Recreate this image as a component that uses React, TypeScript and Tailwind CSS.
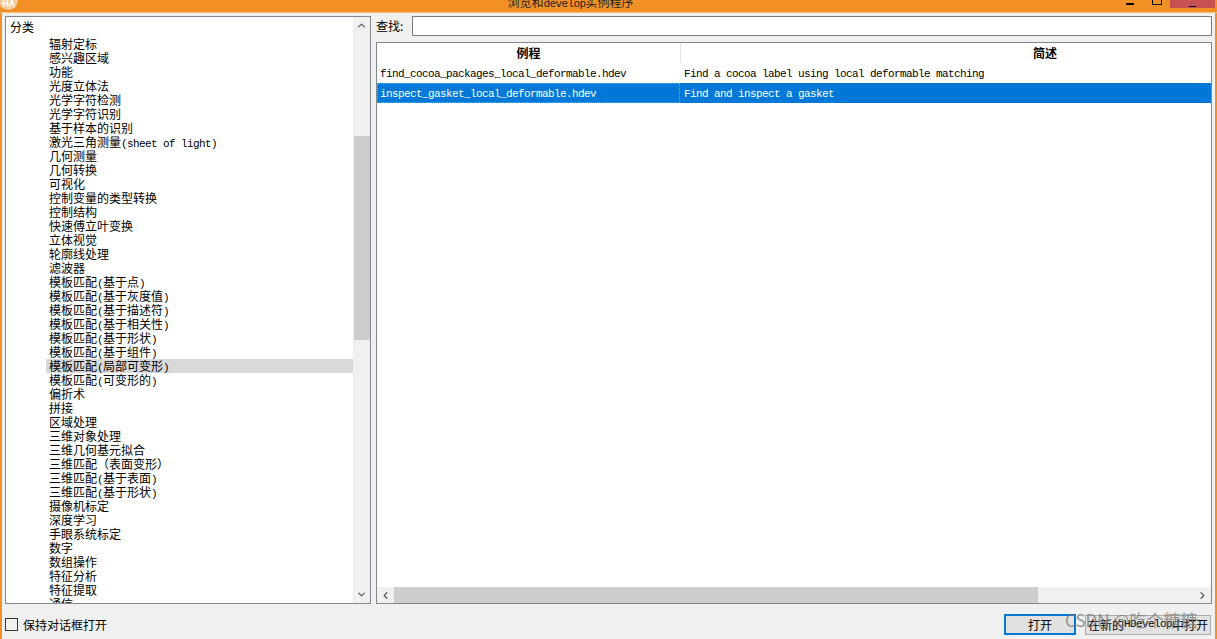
import { ChevronDown, ChevronLeft, ChevronRight, ChevronUp } from "lucide-react";

const categories = [
  "辐射定标", "感兴趣区域", "功能", "光度立体法", "光学字符检测", "光学字符识别", "基于样本的识别",
  "激光三角测量(sheet of light)", "几何测量", "几何转换", "可视化", "控制变量的类型转换", "控制结构",
  "快速傅立叶变换", "立体视觉", "轮廓线处理", "滤波器", "模板匹配(基于点)", "模板匹配(基于灰度值)",
  "模板匹配(基于描述符)", "模板匹配(基于相关性)", "模板匹配(基于形状)", "模板匹配(基于组件)",
  "模板匹配(局部可变形)", "模板匹配(可变形的)", "偏折术", "拼接", "区域处理", "三维对象处理",
  "三维几何基元拟合", "三维匹配（表面变形）", "三维匹配(基于表面)", "三维匹配(基于形状)", "摄像机标定",
  "深度学习", "手眼系统标定", "数字", "数组操作", "特征分析", "特征提取", "通信",
];

// latin runs are 6px wide per char, cjk 12px, same as the bitmap font in the dialog
const Mixed = ({ text }: { text: string }) => (
  <>
    {text.split(/([\x20-\x7e]+)/).filter(Boolean).map((part, i) =>
      /^[\x20-\x7e]/.test(part) ? (
        <span key={i} className="font-['Liberation_Mono',monospace] text-[11px] tracking-[-0.6px] whitespace-pre">
          {part}
        </span>
      ) : (
        <span key={i} className="text-[12px]">
          {part}
        </span>
      )
    )}
  </>
);

const ScrollBtn = ({ children }: { children: React.ReactNode }) => (
  <div className="flex h-[17px] w-[17px] shrink-0 items-center justify-center text-[#606060]">{children}</div>
);

export default function App() {
  return (
    <div className="relative flex h-[639px] w-[1217px] flex-col overflow-hidden bg-[#f0f0f0] font-['Noto_Sans_CJK_SC',sans-serif] text-[12px] text-black">
      {/* Title bar, cut off at the top in the screenshot */}
      <div className="relative flex h-[13px] shrink-0 items-end justify-center overflow-hidden border-b border-[#f5c27a] bg-[#f39025] pr-[76px]">
        <div className="absolute left-[-1px] top-[-9px] flex h-[19px] w-[19px] items-center justify-center rounded-full bg-[#f8c99a] text-[9px] font-bold leading-none text-white">
          <span className="mt-[6px]">HA</span>
        </div>
        <div className="mb-[2px] h-[16px] leading-[16px] text-[#222]">
          <Mixed text="浏览和develop实例程序" />
        </div>
        <div className="absolute right-[83px] top-[3px] h-[2px] w-[8px] bg-black" />
        <div className="absolute right-[55px] top-[-6px] h-[11px] w-[10px] border border-black" />
        <div className="absolute right-[2px] top-0 flex h-[8px] w-[45px] items-end justify-center overflow-hidden bg-[#c75050]">
          <span className="mb-[1px] h-[5px] w-[7px] border-b border-black" />
        </div>
      </div>

      <div className="flex min-h-0 flex-1 flex-col border-l-2 border-r-2 border-l-[#f39025] border-r-[#f39025]">
        <div className="flex h-[591px] shrink-0 gap-[5px] pl-[3px] pt-[3px]">
          {/* Category tree */}
          <div className="flex h-[588px] w-[366px] shrink-0 border border-[#828790] bg-white">
            <div className="min-w-0 flex-1 overflow-hidden">
              <div className="h-[20px] pl-[4px] pt-[3px] leading-[14px]">分类</div>
              {categories.map((name) => (
                <div
                  key={name}
                  className={`ml-[40px] h-[14px] whitespace-nowrap pl-[3px] leading-[14px] ${
                    name === "模板匹配(局部可变形)" ? "bg-[#d9d9d9]" : ""
                  }`}
                >
                  <Mixed text={name} />
                </div>
              ))}
            </div>
            <div className="flex w-[17px] shrink-0 flex-col bg-[#f0f0f0]">
              <ScrollBtn>
                <ChevronUp size={11} strokeWidth={3} />
              </ScrollBtn>
              <div className="min-h-0 flex-1">
                <div className="ml-[1px] mt-[102px] h-[204px] bg-[#cdcdcd]" />
              </div>
              <ScrollBtn>
                <ChevronDown size={11} strokeWidth={3} />
              </ScrollBtn>
            </div>
          </div>

          {/* Search and example table */}
          <div className="flex min-w-0 flex-1 flex-col">
            <div className="flex h-[20px] shrink-0 items-center">
              <span className="w-[36px] shrink-0 leading-[20px]">查找:</span>
              <div className="h-[20px] w-[800px] border border-[#7a7a7a] bg-white" />
            </div>
            <div className="mt-[6px] flex min-h-0 w-[836px] flex-1 flex-col overflow-hidden border border-[#828790] bg-white">
              <div className="flex h-[20px] shrink-0 text-[12px] font-bold leading-[20px]">
                <div className="w-[304px] shrink-0 border-r border-[#e5e5e5] text-center">例程</div>
                <div className="w-[728px] shrink-0 text-center">简述</div>
              </div>
              <div className="flex h-[20px] shrink-0 leading-[16px]">
                <div className="h-[20px] w-[303px] shrink-0 border border-transparent pl-[2px]">
                  <Mixed text="find_cocoa_packages_local_deformable.hdev" />
                </div>
                <div className="h-[20px] border border-transparent pl-[3px]">
                  <Mixed text="Find a cocoa label using local deformable matching" />
                </div>
              </div>
              <div className="flex h-[20px] shrink-0 bg-[#0078d7] leading-[16px] text-white">
                <div className="h-[20px] w-[303px] shrink-0 border border-dotted border-[#f39025] pl-[2px]">
                  <Mixed text="inspect_gasket_local_deformable.hdev" />
                </div>
                <div className="h-[20px] border border-transparent pl-[3px]">
                  <Mixed text="Find and inspect a gasket" />
                </div>
              </div>
              <div className="min-h-0 flex-1" />
              <div className="flex h-[16px] shrink-0 bg-[#f0f0f0]">
                <ScrollBtn>
                  <ChevronLeft size={11} strokeWidth={3} />
                </ScrollBtn>
                <div className="min-w-0 flex-1">
                  <div className="h-full w-[644px] bg-[#cdcdcd]" />
                </div>
                <ScrollBtn>
                  <ChevronRight size={11} strokeWidth={3} />
                </ScrollBtn>
              </div>
            </div>
          </div>
        </div>

        {/* Footer */}
        <div className="flex min-h-0 flex-1 items-center pl-[3px] pr-[4px] pt-[6px]">
          <div className="h-[13px] w-[13px] border border-[#333]" />
          <span className="ml-[5px] leading-[14px]">保持对话框打开</span>
          <div className="ml-auto flex items-center gap-[9px]">
            <div className="flex h-[21px] w-[72px] items-center justify-center border-2 border-[#0078d7] bg-[#e1e1e1]">打开</div>
            <div className="flex h-[20px] w-[126px] items-center justify-center border border-[#adadad] bg-[#e1e1e1]">
              <Mixed text="在新的HDevelop中打开" />
            </div>
          </div>
        </div>
      </div>

      {/* CSDN watermark on top of the buttons */}
      <div className="pointer-events-none absolute left-[1065px] top-[610px] whitespace-nowrap text-[17px] leading-[20px] text-[#777777]/75">
        CSDN @吃个糖糖
      </div>
    </div>
  );
}
